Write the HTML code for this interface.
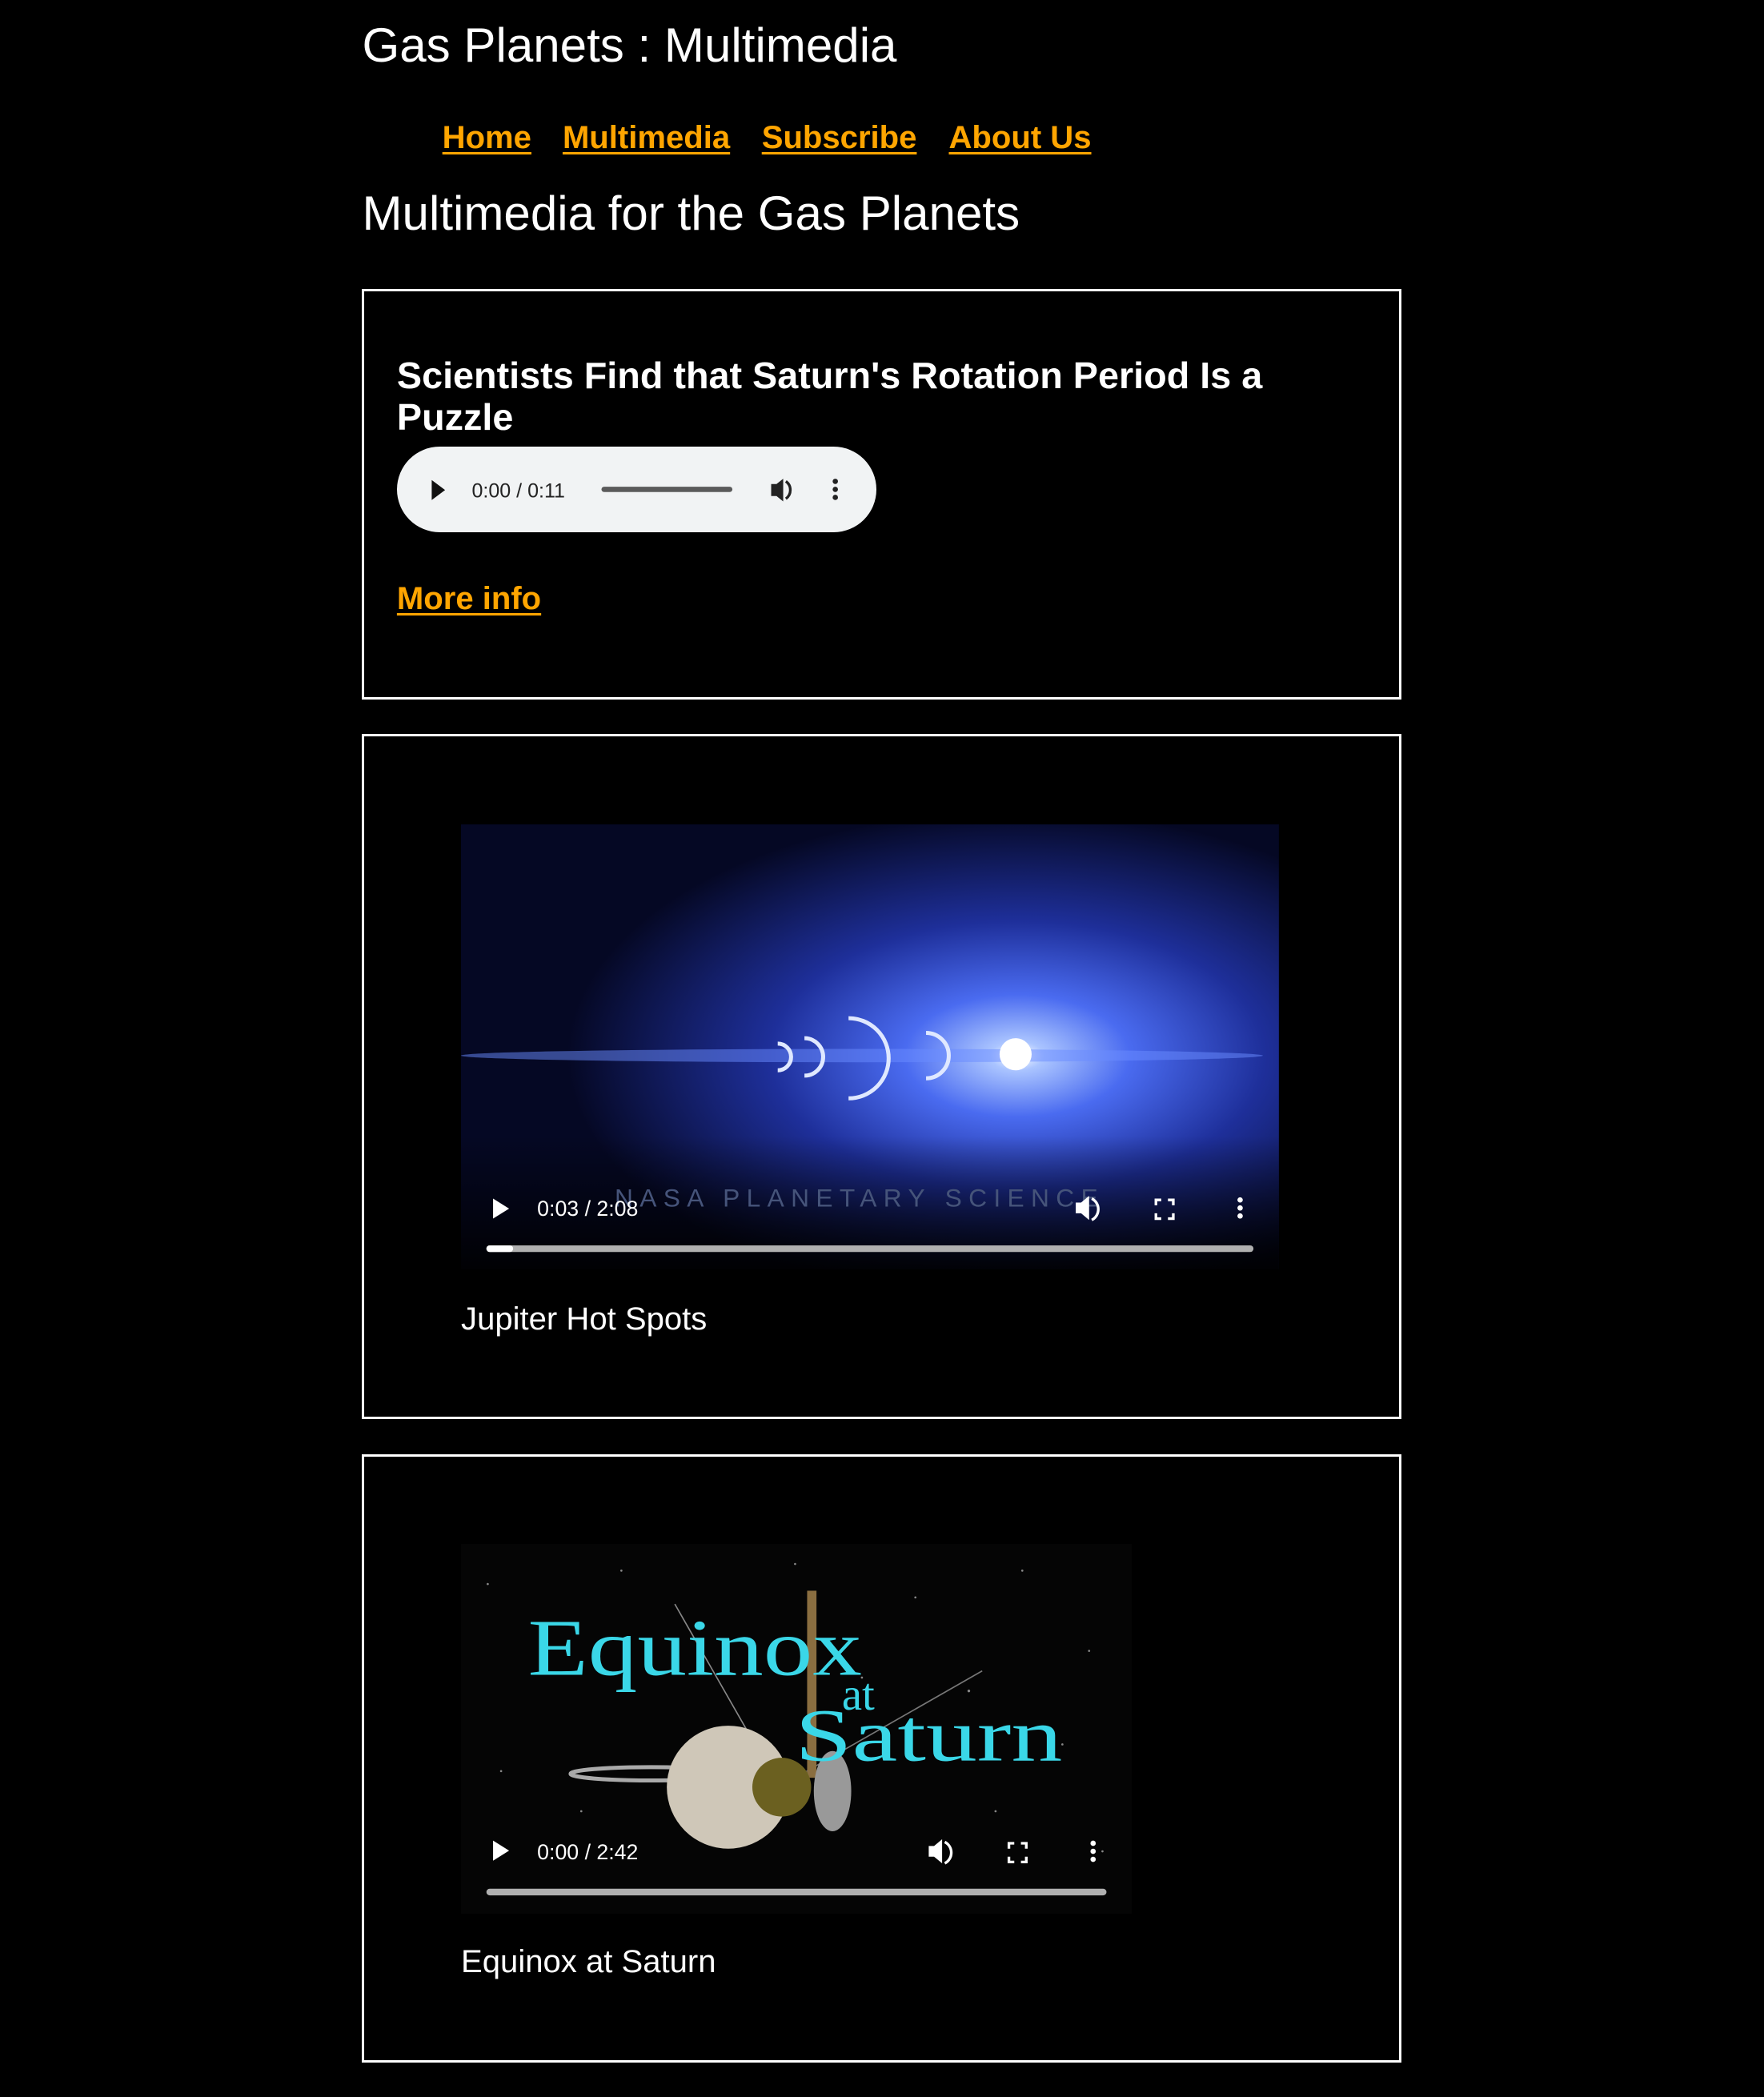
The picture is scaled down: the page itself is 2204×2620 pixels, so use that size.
<!DOCTYPE html>
<html><head><meta charset="utf-8"><style>
html,body{margin:0;padding:0;background:#000;}
#z{zoom:1.6697;position:relative;width:1320px;height:1569px;font-family:"Liberation Sans",Arial,sans-serif;color:#fff;overflow:hidden}
.a{position:absolute;white-space:nowrap}
.lk{color:#ffa500;font-weight:bold;font-size:24px;text-decoration:underline;text-decoration-thickness:2px;text-underline-offset:3px}
.box{position:absolute;left:271px;width:774px;border:2px solid #fff}
</style></head><body><div id="z">
<div class="a" style="left:271px;top:13px;font-size:36px">Gas Planets : Multimedia</div>
<div class="a lk" style="left:331px;top:90px">Home</div>
<div class="a lk" style="left:421px;top:90px">Multimedia</div>
<div class="a lk" style="left:570px;top:90px">Subscribe</div>
<div class="a lk" style="left:710px;top:90px">About Us</div>
<div class="a" style="left:271px;top:139px;font-size:36px">Multimedia for the Gas Planets</div>

<div class="box" style="top:216px;height:304px"></div>
<div class="a" style="left:297px;top:266px;font-size:28px;font-weight:bold;line-height:31px">Scientists Find that Saturn's Rotation Period Is a<br>Puzzle</div>
<div class="a" style="left:297px;top:334px;width:359px;height:64px;border-radius:32px;background:#f1f3f4"></div>
<svg class="a" style="left:297px;top:334px" width="359" height="64">
<path d="M26 25 L26 40 L36 32.5Z" fill="#111"/>
<text x="56" y="38" font-family="Liberation Sans,Arial" font-size="15" fill="#222">0:00 / 0:11</text>
<rect x="153" y="30" width="98" height="4" rx="2" fill="#5a5a5a"/>
<path d="M280 28h4l5-4v17l-5-4h-4z" fill="#222"/><path d="M291 26a8 8 0 0 1 0 13" stroke="#222" stroke-width="2" fill="none"/>
<circle cx="328" cy="26" r="2" fill="#222"/><circle cx="328" cy="32" r="2" fill="#222"/><circle cx="328" cy="38" r="2" fill="#222"/>
</svg>
<div class="a lk" style="left:297px;top:435px">More info</div>

<div class="box" style="top:549px;height:509px"></div>
<svg class="a" style="left:345px;top:617px" width="612" height="333">
<defs>
<radialGradient id="g1" cx="0.68" cy="0.52" r="0.55"><stop offset="0" stop-color="#fff"/><stop offset="0.06" stop-color="#aac4ff"/><stop offset="0.25" stop-color="#4a6bf0"/><stop offset="0.55" stop-color="#1e2f9a"/><stop offset="1" stop-color="#050824"/></radialGradient>
<linearGradient id="g2" x1="0" y1="0" x2="0" y2="1"><stop offset="0.7" stop-color="#000" stop-opacity="0"/><stop offset="1" stop-color="#000" stop-opacity="0.9"/></linearGradient>
</defs>
<rect width="612" height="333" fill="url(#g1)"/>
<rect width="612" height="333" fill="url(#g2)"/>
<ellipse cx="300" cy="173" rx="300" ry="5" fill="#6a8cff" opacity="0.5"/>
<g fill="none" stroke="#dfe8ff" stroke-width="3">
<path d="M237 164a10 10 0 0 1 0 20"/><path d="M257 160a14 14 0 0 1 0 28"/><path d="M290 145a30 30 0 0 1 0 60"/><path d="M348 156a16 16 0 0 1 0 34"/></g>
<circle cx="415" cy="172" r="12" fill="#fff"/>
<text x="115" y="286" font-family="Liberation Sans,Arial" font-size="19" letter-spacing="5" fill="#46547a">NASA PLANETARY SCIENCE</text>
<path d="M24 280v15l12-7.5z" fill="#fff"/>
<text x="57" y="293" font-family="Liberation Sans,Arial" font-size="16" fill="#fff">0:03 / 2:08</text>
<path d="M460 283h4l6-5v18l-6-5h-4z" fill="#fff"/><path d="M472 280a9 9 0 0 1 0 16" stroke="#fff" stroke-width="2" fill="none"/>
<path d="M520 285v-4h4M529 281h4v4M533 291v4h-4M524 295h-4v-4" stroke="#fff" stroke-width="2" fill="none"/>
<circle cx="583" cy="281" r="2" fill="#fff"/><circle cx="583" cy="287" r="2" fill="#fff"/><circle cx="583" cy="293" r="2" fill="#fff"/>
<rect x="19" y="315" width="574" height="5" rx="2.5" fill="#b0b0b0"/><rect x="19" y="315" width="20" height="5" rx="2.5" fill="#fff"/>
</svg>
<div class="a" style="left:345px;top:974px;font-size:24px">Jupiter Hot Spots</div>

<div class="box" style="top:1088px;height:452px"></div>
<svg class="a" style="left:345px;top:1155px" width="502" height="277">
<rect width="502" height="277" fill="#050505"/>
<g fill="#888"><circle cx="20" cy="30" r="0.8"/><circle cx="60" cy="90" r="0.8"/><circle cx="120" cy="20" r="0.8"/><circle cx="180" cy="60" r="0.8"/><circle cx="340" cy="40" r="0.8"/><circle cx="420" cy="20" r="0.8"/><circle cx="470" cy="80" r="0.8"/><circle cx="380" cy="110" r="1"/><circle cx="450" cy="150" r="0.8"/><circle cx="30" cy="170" r="0.8"/><circle cx="90" cy="200" r="0.8"/><circle cx="400" cy="200" r="0.8"/><circle cx="480" cy="230" r="0.8"/><circle cx="250" cy="15" r="0.8"/><circle cx="300" cy="100" r="0.8"/></g>
<line x1="160" y1="45" x2="240" y2="185" stroke="#888" stroke-width="1"/>
<line x1="250" y1="175" x2="390" y2="95" stroke="#777" stroke-width="1"/>
<rect x="259" y="35" width="7" height="140" fill="#8a6e40"/>
<ellipse cx="142" cy="172" rx="60" ry="5" fill="none" stroke="#aaa" stroke-width="3"/>
<circle cx="200" cy="182" r="46" fill="#cfc7b8"/>
<circle cx="240" cy="182" r="22" fill="#6b6020"/><ellipse cx="278" cy="185" rx="14" ry="30" fill="#999"/>
<text x="50" y="98" font-family="Liberation Serif,serif" font-size="60" fill="#3ad7e8" textLength="250" lengthAdjust="spacingAndGlyphs">Equinox</text>
<text x="285" y="124" font-family="Liberation Serif,serif" font-size="34" fill="#3ad7e8">at</text>
<text x="250" y="162" font-family="Liberation Serif,serif" font-size="56" fill="#3ad7e8" textLength="200" lengthAdjust="spacingAndGlyphs">Saturn</text>
<path d="M24 222v15l12-7.5z" fill="#fff"/>
<text x="57" y="236" font-family="Liberation Sans,Arial" font-size="16" fill="#fff">0:00 / 2:42</text>
<path d="M350 226h4l6-5v18l-6-5h-4z" fill="#fff"/><path d="M362 223a9 9 0 0 1 0 16" stroke="#fff" stroke-width="2" fill="none"/>
<path d="M410 228v-4h4M419 224h4v4M423 234v4h-4M414 238h-4v-4" stroke="#fff" stroke-width="2" fill="none"/>
<circle cx="473" cy="224" r="2" fill="#fff"/><circle cx="473" cy="230" r="2" fill="#fff"/><circle cx="473" cy="236" r="2" fill="#fff"/>
<rect x="19" y="258" width="464" height="5" rx="2.5" fill="#b0b0b0"/>
</svg>
<div class="a" style="left:345px;top:1455px;font-size:24px">Equinox at Saturn</div>
</div></body></html>
